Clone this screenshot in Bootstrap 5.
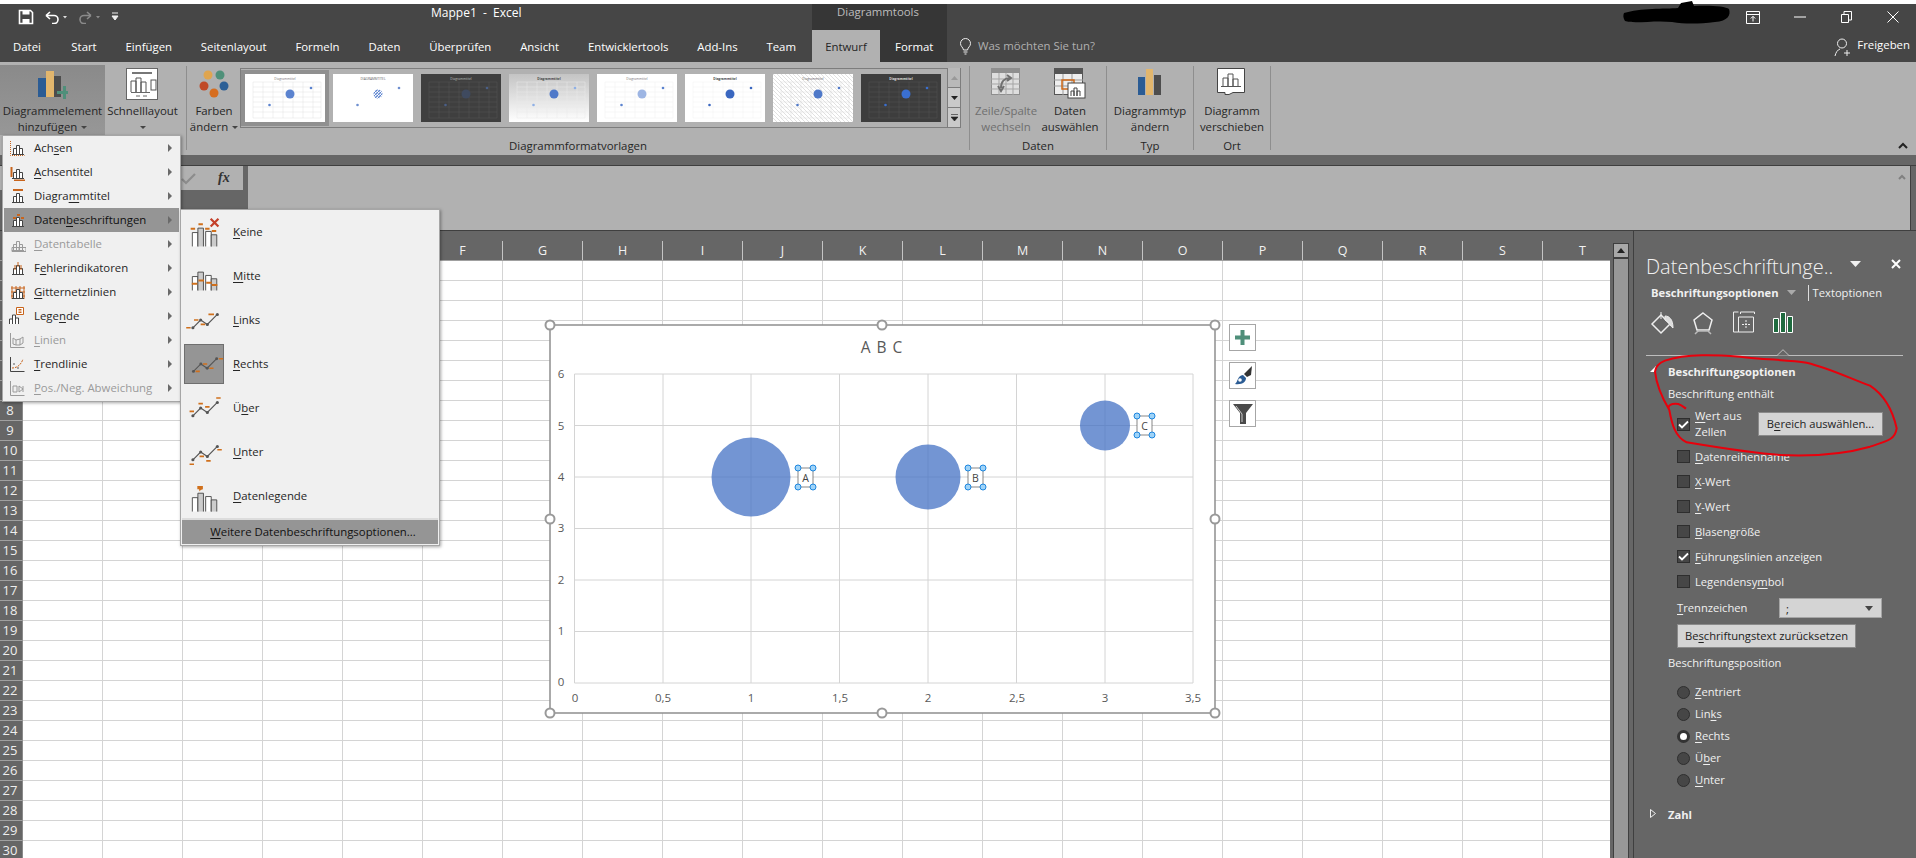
<!DOCTYPE html>
<html lang="de">
<head>
  <meta charset="UTF-8">
  <title>Mappe1 - Excel</title>
  <link href="https://cdn.jsdelivr.net/npm/bootstrap@5.3.3/dist/css/bootstrap.min.css" rel="stylesheet">
  <style>
    html, body { margin: 0; width: 1916px; height: 858px; overflow: hidden; background: #fff; }
    body { font-family: "Open Sans", "Liberation Sans", sans-serif; font-size: 11.4px; line-height: 16px; color: #262626; padding-top: 4px; position: relative; }
    u { text-underline-offset: 2px; }
    svg { display: block; }

    /* title bar and tabs */
    .xl-titlerow { height: 26px; background: #464646; color: #fff; }
    .xl-quick { width: 431px; padding-left: 18px; gap: 11px; }
    .xl-title { width: 381px; font-size: 12px; padding-top: 1px; }
    .xl-context { width: 135px; background: #363636; color: #bdbdbd; text-align: center; padding-right: 3px; }
    .xl-winbtns { width: 186px; }
    .xl-winbtns > div { width: 46.5px; }
    .xl-tabrow { height: 32px; background: #464646; color: #fff; }
    .xl-maintabs { width: 812px; }
    .xl-tab { padding: 9px 14.4px 0; white-space: nowrap; }
    .xl-tab:first-child { padding: 9px 16px 0 13px; }
    .xl-tab.is-active { background: #b1b1b1; color: #262626; width: 68px; padding: 9px 0 0; text-align: center; }
    .xl-tab.is-format { padding: 9px 0 0 15px; }
    .xl-contexttabs { width: 135px; background: #363636; }
    .xl-search { color: #b0b0b0; padding: 8px 0 0 12px; gap: 6px; width: 831px; }
    .xl-share { gap: 5px; padding: 7px 6px 0 0; }

    /* ribbon */
    .xl-ribbon { height: 93px; background: #b1b1b1; padding-top: 3px; position: relative; }
    .rb-group { height: 87px; }
    .rb-g1 { width: 186px; } .rb-g2 { width: 782px; } .rb-g3 { width: 136px; } .rb-g4 { width: 86px; } .rb-g5 { width: 76px; }
    .rb-sep { width: 1px; height: 84px; margin-top: 1px; background: #8e8e8e; }
    .rb-items { height: 70px; }
    .rb-label { height: 18px; margin-top: 2px; line-height: 18px; text-align: center; }
    .rb-btn { height: 70px; padding: 3px 0 0; border: 0; border-radius: 0; color: #262626; font-size: 11.4px; line-height: 16px; white-space: nowrap; }
    .rb-btn.is-open { background: linear-gradient(#8a8a8a, #979797); }
    .rb-btn.is-off { color: #6f6f6f; }
    .rb-w105 { width: 105px; } .rb-w75 { width: 75px; } .rb-w54 { width: 54px; } .rb-w64 { width: 64px; }
    .rb-icon { height: 35px; }
    .rb-caret { display: inline-block; width: 0; height: 0; border: 3px solid transparent; border-top: 3px solid #444; border-bottom: 0; margin-left: 4px; vertical-align: middle; }
    .rb-gallery { width: 721px; height: 60px; margin: 3px 0 0 -1px; border: 1px solid #7d7d7d; padding: 1px 0 0 0; background: #b1b1b1; }
    .rb-thumb { width: 88px; height: 56px; padding: 4px; }
    .rb-thumb.is-on { background: #909090; }
    .rb-spin { width: 14px; margin-left: 2px; margin-top: -2px; height: 60px; }
    .rb-spin > div { flex: 1; background: #c9c9c9; border-left: 1px solid #7d7d7d; border-bottom: 1px solid #7d7d7d; }
    .rb-spin > div:first-child { background: #b9b9b9; }
    .rb-collapse { position: absolute; right: 8px; bottom: 6px; }

    /* formula bar */
    .xl-formula { height: 76px; background: #666; padding-top: 10px; }
    .fx-inner { height: 66px; border-top: 1px solid #3f3f3f; border-bottom: 1px solid #3f3f3f; }
    .fx-tools { width: 243px; height: 24px; background: #b1b1b1; padding-left: 180px; gap: 21px; }
    .fx-sym { font-family: "Liberation Serif", serif; font-style: italic; font-weight: 700; font-size: 14px; color: #333; }
    .fx-input { width: 1663px; margin-left: 5px; background: #b1b1b1; border-right: 1px solid #3f3f3f; position: relative; }

    /* sheet */
    .xl-main { height: 627px; }
    .xl-left { width: 1610px; overflow: hidden; }
    .xl-colhead { height: 30px; background: #666; border-bottom: 1px solid #a0a0a0; padding: 10px 0 0 23px; color: #f2f2f2; font-size: 12.5px; line-height: 19px; }
    .xl-colhead > div { flex: 0 0 80px; text-align: center; border-right: 1px solid #c4c4c4; }
    .xl-sheet { height: 597px; }
    .xl-rows { width: 23px; background: #666; color: #eee; font-size: 13px; }
    .xl-rows > div { flex: 0 0 20px; line-height: 19px; text-align: center; padding-right: 2px; border-bottom: 1px solid #a0a0a0; border-right: 1px solid #8a8a8a; }
    .xl-cells { flex: 1; background-color: #fff;
      background-image: linear-gradient(to left, #d4d4d4 1px, transparent 1px), linear-gradient(to top, #d4d4d4 1px, transparent 1px);
      background-size: 80px 20px; }
    .xl-scroll { width: 23px; background: #666; padding: 12px 0 0 3px; }
    .xl-scrolltrack { width: 16px; height: 100%; background: #989898; border: solid #3f3f3f; border-width: 0 1px; }
    .xl-scrollup { height: 16px; margin: 0 -1px; border: 1px solid #3f3f3f; border-bottom-width: 2px; background: #a8a8a8; }

    /* pane */
    .xl-pane { flex: 1; background: #666; color: #f0f0f0; border-left: 1px solid #3f3f3f; padding-left: 12px; font-size: 11.2px; position: relative; }
    .pn-title { margin-top: 22px; height: 28px; font-size: 20px; line-height: 28px; font-weight: 300; white-space: nowrap; color: #f2f2f2; width: 194px; }
    .pn-drop { margin: 30px 0 0 10px; }
    .pn-close { margin: 28px 0 0 30px; }
    .pn-sub { margin-top: 3px; height: 18px; line-height: 18px; padding-left: 5px; }
    .pn-vline { width: 1px; height: 16px; background: #ddd; margin: 0 4px 0 12px; }
    .pn-icons { margin-top: 9px; height: 28px; }
    .pn-ico-1 { margin-left: 4px; } .pn-ico-2 { margin-left: 16px; } .pn-ico-3 { margin-left: 19px; } .pn-ico-4 { margin-left: 18px; }
    .pn-rule { position: relative; margin-top: 16px; width: 257px; height: 1px; background: #bdbdbd; }
    .pn-notch { position: absolute; left: 130px; top: -6px; }
    .pn-head { margin-top: 8px; height: 16px; padding-left: 22px; font-weight: 700; position: relative; }
    .pn-head svg { position: absolute; left: 4px; top: 2px; }
    .pn-text { margin-top: 6px; height: 16px; padding-left: 22px; }
    .pn-row { height: 25px; padding-left: 31px; gap: 5px; }
    .pn-firstrow { margin-top: 6px; height: 32px; padding-left: 31px; gap: 5px; }
    .pn-wrap { width: 58px; }
    .pn-gap { margin-top: 4px; }
    .pn-check { width: 13px; height: 13px; background: #464646; border: 1px solid #2e2e2e; flex: none; }
    .pn-btn { background: #d4d4d4; color: #222; border: 1px solid #8a8a8a; border-radius: 0; padding: 0; font-size: 11.2px; line-height: 16px; white-space: nowrap; }
    .pn-pick { width: 125px; height: 24px; }
    .pn-reset { width: 179px; height: 24px; margin: 6px 0 0 31px; display: block; }
    .pn-seprow { margin-top: 4px; height: 20px; padding-left: 31px; }
    .pn-seplabel { width: 102px; }
    .pn-select { width: 103px; height: 20px; background: #d4d4d4; border: 1px solid #a5a5a5; color: #222; padding-left: 6px; line-height: 17px; }
    .pn-radio { width: 13px; height: 13px; border-radius: 50%; background: #464646; border: 1px solid #2e2e2e; flex: none; position: relative; }
    .pn-radio.is-on { background: #fff; border: 3px solid #333; }
    .pn-radiorow { height: 22px; padding-left: 31px; gap: 5px; }
    .pn-poslabel { margin-top: 7px; }
    .pn-radios { margin-top: 10px; }
    .pn-zahl { margin-top: 16px; }

    /* menus */
    .xl-menu { position: absolute; display: block; min-width: 0; padding: 0; margin: 0; border-radius: 0; background: #f0f0f0; border: 1px solid #a6a6a6; box-shadow: 1px 1px 3px rgba(0,0,0,.35); font-size: 11.4px; color: #262626; }
    .xl-menu-main { left: 2px; top: 135px; width: 179px; height: 267px; padding: 0 1px; z-index: 6; }
    .xl-menu-sub { left: 180px; top: 209px; width: 260px; height: 337px; z-index: 7; padding: 0 1px; }
    .mn-item { height: 24px; padding: 0 0 0 30px; position: relative; color: inherit; line-height: 24px; white-space: nowrap; }
    .mn-item:hover { background: none; }
    .mn-item.is-on { background: #959595; color: #111; }
    .mn-item.is-off { color: #9a9a9a; }
    .mn-ico { position: absolute; left: 4px; top: 3px; }
    .mn-arrow { position: absolute; right: 7px; top: 8px; width: 0; height: 0; border: 4px solid transparent; border-left: 4px solid #6a6a6a; border-right: 0; }
    .sb-item { height: 44px; padding: 0 0 0 51px; position: relative; line-height: 44px; color: inherit; }
    .sb-item:hover { background: none; }
    .sb-ico { position: absolute; left: 2px; top: 2px; width: 40px; height: 40px; }
    .sb-ico.is-on { background: #959595; border: 1px solid #6f6f6f; }
    .sb-more { margin-top: 2px; height: 24px; background: #959595; color: #111; line-height: 24px; text-align: center; padding: 0 0 0 6px; box-shadow: 0 -2px 0 #dcdcdc; }
    .sb-more:hover { background: #959595; }

    /* chart */
    .xl-chart { position: absolute; left: 540px; top: 315px; z-index: 3; }
    .xl-side { position: absolute; left: 1229px; width: 27px; height: 27px; background: #fff; border: 1px solid #a6a6a6; z-index: 3; }
    .xl-side-a { top: 324px; } .xl-side-b { top: 362px; } .xl-side-c { top: 400px; }
    .xl-ink { position: absolute; left: 1630px; top: 240px; z-index: 8; pointer-events: none; }
    .xl-scribble { position: absolute; left: 1620px; top: 0; z-index: 8; }
  </style>
</head>
<body>
  <svg width="0" height="0" class="position-absolute">
    <defs>
      <symbol id="bars" viewBox="0 0 18 18"><path d="M5.5 15V9.5h3V15M8.5 15V6.5h3V15M11.5 15V9.5h3V15M4 15.5h12" fill="#fff" stroke="#444"/></symbol>
      <symbol id="barsoff" viewBox="0 0 18 18"><path d="M5.5 15V9.5h3V15M8.5 15V6.5h3V15M11.5 15V9.5h3V15M4 15.5h12" fill="none" stroke="#9a9a9a"/></symbol>
      <g id="subbars"><path d="M2.5 26V13.5h5V26" fill="#fff" stroke="#444" stroke-width=".8"/><path d="M7.5 26V9.5h5V26" fill="#ccc" stroke="#444" stroke-width=".8"/><path d="M14.5 26V12.5h5V26" fill="#fff" stroke="#444" stroke-width=".8"/><path d="M19.5 26V15.5h5V26" fill="#ccc" stroke="#444" stroke-width=".8"/></g>
      <g id="subline"><path d="M3 21L10 14L16 18L25 9" fill="none" stroke="#555"/><circle cx="3" cy="21" r="1.4" fill="#555"/><circle cx="10" cy="14" r="1.4" fill="#555"/><circle cx="16" cy="18" r="1.4" fill="#555"/><circle cx="25" cy="9" r="1.4" fill="#555"/></g>
    </defs>
  </svg>

  <!-- title bar -->
  <div class="xl-titlerow d-flex">
    <div class="xl-quick d-flex align-items-center">
      <svg width="16" height="16" viewBox="0 0 16 16"><path d="M1.5 1.5h11l2 2v11h-13z" fill="none" stroke="#fff" stroke-width="1.6"/><path d="M4.5 1.5h7v4h-7zM4.5 10h7v4.5h-7z" fill="#fff"/></svg>
      <svg width="22" height="14" viewBox="0 0 22 14"><path d="M1 5.5L5 2M1 5.5L5 9M1 5.5H9a4 4 0 0 1 0 8H7" fill="none" stroke="#fff" stroke-width="1.6"/><path d="M18 6h4l-2 2.5z" fill="#ddd"/></svg>
      <svg width="22" height="14" viewBox="0 0 22 14"><path d="M13 5.5L9 2M13 5.5L9 9M13 5.5H6a4 4 0 0 0 0 8h2" fill="none" stroke="#8a8a8a" stroke-width="1.6"/><path d="M18 6h4l-2 2.5z" fill="#8a8a8a"/></svg>
      <svg width="8" height="10" viewBox="0 0 8 10"><path d="M1 1h6M1 4h6L4 8z" stroke="#eee" fill="#eee"/></svg>
    </div>
    <div class="xl-title">Mappe1&nbsp; -&nbsp; Excel</div>
    <div class="xl-context">Diagrammtools</div>
    <div class="flex-grow-1"></div>
    <div class="xl-winbtns d-flex align-items-center text-center">
      <div class="d-flex justify-content-center"><svg width="14" height="13" viewBox="0 0 14 13"><path d="M.5.5h13v12H.5zM.5 3.5h13M7 10.5V5.5M4.8 7.5L7 5.3l2.2 2.2" fill="none" stroke="#fff"/></svg></div>
      <div class="d-flex justify-content-center"><svg width="12" height="2" viewBox="0 0 12 2"><path d="M0 1h12" stroke="#fff"/></svg></div>
      <div class="d-flex justify-content-center"><svg width="11" height="12" viewBox="0 0 11 12"><path d="M.5 3.5h7v8h-7zM3 3.5V.5h7.5V9H8" fill="none" stroke="#fff"/></svg></div>
      <div class="d-flex justify-content-center"><svg width="12" height="12" viewBox="0 0 12 12"><path d="M.5.5l11 11M11.5.5l-11 11" stroke="#fff"/></svg></div>
    </div>
  </div>
  <svg class="xl-scribble" width="115" height="26" viewBox="0 0 115 26"><path d="M4 13C20 8 45 9 58 8L61 3L72 1L74 6C88 5 106 6 109 9C111 15 108 21 95 22C78 24 65 24 52 22C35 20 14 24 5 21C3 18 3 15 4 13z" fill="#000"/></svg>

  <div class="xl-tabrow d-flex">
    <div class="xl-maintabs d-flex">
      <div class="xl-tab">Datei</div>
      <div class="xl-tab">Start</div>
      <div class="xl-tab">Einfügen</div>
      <div class="xl-tab">Seitenlayout</div>
      <div class="xl-tab">Formeln</div>
      <div class="xl-tab">Daten</div>
      <div class="xl-tab">Überprüfen</div>
      <div class="xl-tab">Ansicht</div>
      <div class="xl-tab">Entwicklertools</div>
      <div class="xl-tab">Add-Ins</div>
      <div class="xl-tab">Team</div>
    </div>
    <div class="xl-contexttabs d-flex">
      <div class="xl-tab is-active">Entwurf</div>
      <div class="xl-tab is-format">Format</div>
    </div>
    <div class="xl-search d-flex">
      <svg width="13" height="17" viewBox="0 0 13 17"><path d="M4.5 12C4 9 1.5 8.5 1.5 5.5a5 5 0 0 1 10 0C11.5 8.5 9 9 8.5 12zM4.5 14h4M5.5 16h2" fill="none" stroke="#eee"/></svg>
      <span>Was möchten Sie tun?</span>
    </div>
    <div class="xl-share d-flex flex-grow-1 justify-content-end">
      <svg width="18" height="20" viewBox="0 0 18 20"><circle cx="8" cy="6.5" r="4.5" fill="none" stroke="#eee"/><path d="M1 19c1-4 2.5-6 5-7M13 13v6M10 16h6" fill="none" stroke="#eee"/></svg>
      <span>Freigeben</span>
    </div>
  </div>

  <!-- ribbon -->
  <div class="xl-ribbon d-flex">
    <div class="rb-group rb-g1 d-flex flex-column">
      <div class="rb-items d-flex">
        <button class="btn rb-btn rb-w105 is-open d-flex flex-column align-items-center">
          <div class="rb-icon"><svg width="30" height="32" viewBox="0 0 30 32"><rect x="0" y="10" width="8" height="19" fill="#2b5c94"/><rect x="8" y="3" width="8" height="26" fill="#e2b66d"/><rect x="16" y="8" width="7" height="21" fill="#4d4d4d"/><path d="M19 23h6v-5h3v5h4v3h-4v5h-3v-5h-6z" fill="#4f8f7a"/></svg></div>
          <span>Diagrammelement</span>
          <span>hinzufügen<i class="rb-caret"></i></span>
        </button>
        <button class="btn rb-btn rb-w75 d-flex flex-column align-items-center">
          <div class="rb-icon"><svg width="33" height="33" viewBox="0 0 33 33"><rect x=".5" y=".5" width="31" height="31" fill="#fff" stroke="#666"/><path d="M6 5h20" stroke="#777" stroke-width="2"/><path d="M5 24V13h5v11M10 24V10h5v14M15 24V14h5v10" fill="none" stroke="#555"/><path d="M5 24.5h19M10 28h4M17 28h4" stroke="#666"/><rect x="25" y="12" width="5" height="10" fill="#fff" stroke="#555"/></svg></div>
          <span>Schnelllayout</span>
          <span><i class="rb-caret ms-0"></i></span>
        </button>
      </div>
    </div>
    <div class="rb-sep"></div>
    <div class="rb-group rb-g2 d-flex flex-column">
      <div class="rb-items d-flex">
        <button class="btn rb-btn rb-w54 d-flex flex-column align-items-center">
          <div class="rb-icon"><svg width="30" height="32" viewBox="0 0 30 32"><circle cx="9" cy="7" r="4.5" fill="#dfa54f"/><circle cx="21" cy="7" r="4.5" fill="#4f9079"/><circle cx="5" cy="18" r="4.5" fill="#c04a28"/><circle cx="25" cy="18" r="4.5" fill="#2c5f96"/><circle cx="15" cy="25" r="4.5" fill="#d66d1f"/></svg></div>
          <span>Farben</span>
          <span>ändern<i class="rb-caret"></i></span>
        </button>
        <div class="rb-gallery d-flex" id="gallery"></div>
      </div>
      <div class="rb-label">Diagrammformatvorlagen</div>
    </div>
    <div class="rb-sep"></div>
    <div class="rb-group rb-g3 d-flex flex-column">
      <div class="rb-items d-flex justify-content-center">
        <button class="btn rb-btn rb-w64 is-off d-flex flex-column align-items-center">
          <div class="rb-icon"><svg width="30" height="28" viewBox="0 0 30 28"><rect x=".5" y=".5" width="28" height="26" fill="#dedede" stroke="#8e8e8e"/><rect x="0" y="0" width="29" height="5" fill="#8e8e8e"/><path d="M0 11h29M0 16h29M0 21h29M8 5v22M15 5v22M22 5v22" stroke="#a5a5a5"/><path d="M10 20c0-7 4-10 9-10M16 7l4 3-4 3M7 18l3 5 3-5" fill="none" stroke="#707070" stroke-width="2"/></svg></div>
          <span>Zeile/Spalte</span>
          <span>wechseln</span>
        </button>
        <button class="btn rb-btn rb-w64 d-flex flex-column align-items-center">
          <div class="rb-icon"><svg width="32" height="31" viewBox="0 0 32 31"><rect x=".5" y=".5" width="28" height="26" fill="#eee" stroke="#555"/><rect x="0" y="0" width="29" height="6" fill="#555"/><path d="M0 12h29M0 18h29M9 6v21M18 6v21" stroke="#999"/><path d="M8 12h12v9H8z" fill="none" stroke="#d06a18" stroke-width="1.5"/><rect x="14" y="15" width="17" height="15" fill="#fff" stroke="#444"/><path d="M17 28v-5h3v5M20 28v-8h3v8M23 28v-5h3v5" fill="none" stroke="#444"/></svg></div>
          <span>Daten</span>
          <span>auswählen</span>
        </button>
      </div>
      <div class="rb-label">Daten</div>
    </div>
    <div class="rb-sep"></div>
    <div class="rb-group rb-g4 d-flex flex-column">
      <div class="rb-items d-flex justify-content-center">
        <button class="btn rb-btn d-flex flex-column align-items-center">
          <div class="rb-icon"><svg width="24" height="28" viewBox="0 0 24 28"><rect x="0" y="9" width="7" height="18" fill="#2b5c94"/><rect x="8" y="1" width="7" height="26" fill="#e2b66d"/><rect x="16" y="7" width="7" height="20" fill="#4d4d4d"/></svg></div>
          <span>Diagrammtyp</span>
          <span>ändern</span>
        </button>
      </div>
      <div class="rb-label">Typ</div>
    </div>
    <div class="rb-sep"></div>
    <div class="rb-group rb-g5 d-flex flex-column">
      <div class="rb-items d-flex justify-content-center">
        <button class="btn rb-btn d-flex flex-column align-items-center">
          <div class="rb-icon"><svg width="29" height="27" viewBox="0 0 29 27"><path d="M.5.5h27v24H16l-4 2H8v-2H.5z" fill="#fff" stroke="#444"/><path d="M6 18v-8h5v8M11 18V6h5v12M16 18v-7h5v7" fill="none" stroke="#555"/><path d="M4 18.5h20" stroke="#555"/></svg></div>
          <span>Diagramm</span>
          <span>verschieben</span>
        </button>
      </div>
      <div class="rb-label">Ort</div>
    </div>
    <div class="rb-sep"></div>
    <svg class="rb-collapse" width="10" height="7" viewBox="0 0 10 7"><path d="M1 6l4-4 4 4" fill="none" stroke="#222" stroke-width="2"/></svg>
  </div>

  <!-- formula bar -->
  <div class="xl-formula">
    <div class="fx-inner d-flex">
      <div class="fx-tools d-flex align-items-center">
        <svg width="17" height="13" viewBox="0 0 17 13"><path d="M2 7l4 4 9-9" fill="none" stroke="#8c8c8c" stroke-width="2.2"/></svg>
        <span class="fx-sym">fx</span>
      </div>
      <div class="fx-input">
        <svg class="position-absolute top-0 end-0 me-1 mt-2" width="8" height="6" viewBox="0 0 8 6"><path d="M1 5l3-3 3 3" fill="none" stroke="#808080" stroke-width="2"/></svg>
      </div>
    </div>
  </div>

  <!-- sheet and pane -->
  <div class="xl-main d-flex">
    <div class="xl-left d-flex flex-column">
      <div class="xl-colhead d-flex" id="colhead"></div>
      <div class="xl-sheet d-flex">
        <div class="xl-rows d-flex flex-column" id="rowhead"></div>
        <div class="xl-cells"></div>
      </div>
    </div>
    <div class="xl-scroll">
      <div class="xl-scrolltrack">
        <div class="xl-scrollup d-flex align-items-center justify-content-center">
          <svg width="8" height="5" viewBox="0 0 8 5"><path d="M0 5l4-5 4 5z" fill="#222"/></svg>
        </div>
      </div>
    </div>
    <div class="xl-pane">
      <div class="d-flex">
        <div class="pn-title overflow-hidden">Datenbeschriftunge..</div>
        <svg class="pn-drop" width="11" height="7" viewBox="0 0 11 7"><path d="M0 0h11L5.5 6z" fill="#f0f0f0"/></svg>
        <svg class="pn-close" width="10" height="10" viewBox="0 0 10 10"><path d="M1 1l8 8M9 1l-8 8" stroke="#fff" stroke-width="2"/></svg>
      </div>
      <div class="pn-sub d-flex align-items-center">
        <b>Beschriftungsoptionen</b>
        <svg class="ms-2" width="9" height="6" viewBox="0 0 9 6"><path d="M0 0h9L4.5 5z" fill="#aaa"/></svg>
        <span class="pn-vline"></span>
        <span>Textoptionen</span>
      </div>
      <div class="pn-icons d-flex">
        <svg class="pn-ico-1" width="26" height="24" viewBox="0 0 26 24"><path d="M2 13L11 4l9 9-9 9z" fill="none" stroke="#eee" stroke-width="1.5"/><path d="M11 1v7M15 5c4 0 8 3 8 12-2-1-4-6-8-8z" fill="#ddd" stroke="#eee"/></svg>
        <svg class="pn-ico-2" width="22" height="24" viewBox="0 0 22 24"><path d="M11 2l9 7-3 10H5L2 9z" fill="none" stroke="#eee" stroke-width="1.5"/><path d="M3 23l3-3M19 23l-3-3M6 20h10" stroke="#bbb" stroke-width="1.5"/></svg>
        <svg class="pn-ico-3" width="22" height="22" viewBox="0 0 22 22"><path d="M.5 1v20M.5 1h5M.5 21h5M7.5 1h14M7.5 1v2M21.5 1v2M5.5 6h15v15h-15z" fill="none" stroke="#eee"/><path d="M13 9v9M9 13.5h8" stroke="#eee" stroke-dasharray="2 1"/></svg>
        <svg class="pn-ico-4" width="21" height="22" viewBox="0 0 21 22"><path d="M.5 7.5h5v14h-5zM7.5 1.5h5v20h-5zM14.5 5.5h5v16h-5z" fill="#1f6b3f" stroke="#fff"/></svg>
      </div>
      <div class="pn-rule">
        <svg class="pn-notch" width="14" height="8" viewBox="0 0 14 8"><path d="M0 6.5h1L7 .7l6 5.8h1" fill="#666" stroke="#bdbdbd"/></svg>
      </div>
      <div class="pn-head">
        <svg width="6" height="6" viewBox="0 0 6 6"><path d="M6 0v6H0z" fill="#fff"/></svg>
        Beschriftungsoptionen
      </div>
      <div class="pn-text">Beschriftung enthält</div>
      <div class="pn-firstrow d-flex align-items-center">
        <span class="pn-check d-flex align-items-center justify-content-center"><svg width="11" height="9" viewBox="0 0 11 9"><path d="M1 4.5l3 3 6-6" fill="none" stroke="#fff" stroke-width="1.8"/></svg></span>
        <span class="pn-wrap"><u>W</u>ert aus Zellen</span>
        <button class="btn pn-btn pn-pick">B<u>e</u>reich auswählen...</button>
      </div>
      <div class="pn-row pn-gap d-flex align-items-center"><span class="pn-check"></span><span><u>D</u>atenreihenname</span></div>
      <div class="pn-row d-flex align-items-center"><span class="pn-check"></span><span><u>X</u>-Wert</span></div>
      <div class="pn-row d-flex align-items-center"><span class="pn-check"></span><span><u>Y</u>-Wert</span></div>
      <div class="pn-row d-flex align-items-center"><span class="pn-check"></span><span><u>B</u>lasengröße</span></div>
      <div class="pn-row d-flex align-items-center"><span class="pn-check d-flex align-items-center justify-content-center"><svg width="11" height="9" viewBox="0 0 11 9"><path d="M1 4.5l3 3 6-6" fill="none" stroke="#fff" stroke-width="1.8"/></svg></span><span><u>F</u>ührungslinien anzeigen</span></div>
      <div class="pn-row d-flex align-items-center"><span class="pn-check"></span><span>Legendensy<u>m</u>bol</span></div>
      <div class="pn-seprow d-flex align-items-center">
        <span class="pn-seplabel"><u>T</u>rennzeichen</span>
        <div class="pn-select d-flex justify-content-between align-items-center pe-2"><span>;</span><svg width="8" height="5" viewBox="0 0 8 5"><path d="M0 0h8L4 5z" fill="#444"/></svg></div>
      </div>
      <button class="btn pn-btn pn-reset">Be<u>s</u>chriftungstext zurücksetzen</button>
      <div class="pn-text pn-poslabel">Beschriftungsposition</div>
      <div class="pn-radios">
        <div class="pn-radiorow d-flex align-items-center"><span class="pn-radio"></span><span><u>Z</u>entriert</span></div>
        <div class="pn-radiorow d-flex align-items-center"><span class="pn-radio"></span><span>Lin<u>k</u>s</span></div>
        <div class="pn-radiorow d-flex align-items-center"><span class="pn-radio is-on"></span><span><u>R</u>echts</span></div>
        <div class="pn-radiorow d-flex align-items-center"><span class="pn-radio"></span><span>Ü<u>b</u>er</span></div>
        <div class="pn-radiorow d-flex align-items-center"><span class="pn-radio"></span><span><u>U</u>nter</span></div>
      </div>
      <div class="pn-head pn-zahl">
        <svg width="6" height="9" viewBox="0 0 6 9"><path d="M.5.5l5 4-5 4z" fill="none" stroke="#eee"/></svg>
        Zahl
      </div>
    </div>
  </div>

  <!-- chart object -->
  <svg class="xl-chart" width="690" height="410" viewBox="540 315 690 410" font-family="Open Sans, Liberation Sans, sans-serif">
    <rect x="550" y="325" width="665" height="388" fill="#fff" stroke="#8e8e8e" stroke-width="1.5"/>
    <g stroke="#d4d4d4" stroke-width="1">
      <path d="M574.5 374H1193M574.5 425.5H1193M574.5 477H1193M574.5 528.5H1193M574.5 580H1193M574.5 631.5H1193M574.5 683H1193"/>
      <path d="M574.5 374V683M663 374V683M751 374V683M839.5 374V683M928 374V683M1016.5 374V683M1105 374V683M1193 374V683"/>
    </g>
    <g fill="#4472c4" fill-opacity=".75">
      <circle cx="751" cy="477" r="39.5"/>
      <circle cx="928" cy="477" r="32.5"/>
      <circle cx="1105" cy="425.5" r="25"/>
    </g>
    <text x="882" y="353" text-anchor="middle" font-size="15.5" letter-spacing="1" fill="#595959">A B C</text>
    <g font-size="11.5" fill="#595959" text-anchor="middle">
      <text x="561" y="378">6</text><text x="561" y="430">5</text><text x="561" y="481">4</text><text x="561" y="532">3</text><text x="561" y="584">2</text><text x="561" y="635">1</text><text x="561" y="686">0</text>
      <text x="575" y="702">0</text><text x="663" y="702">0,5</text><text x="751" y="702">1</text><text x="840" y="702">1,5</text><text x="928" y="702">2</text><text x="1017" y="702">2,5</text><text x="1105" y="702">3</text><text x="1193" y="702">3,5</text>
    </g>
    <g id="labels"></g>
    <g fill="#fff" stroke="#999" stroke-width="2">
      <circle cx="550" cy="325" r="4.5"/><circle cx="882" cy="325" r="4.5"/><circle cx="1215" cy="325" r="4.5"/>
      <circle cx="550" cy="519" r="4.5"/><circle cx="1215" cy="519" r="4.5"/>
      <circle cx="550" cy="713" r="4.5"/><circle cx="882" cy="713" r="4.5"/><circle cx="1215" cy="713" r="4.5"/>
    </g>
  </svg>
  <div class="xl-side xl-side-a d-flex align-items-center justify-content-center"><svg width="15" height="15" viewBox="0 0 15 15"><path d="M5.5 0h4v5.5H15v4H9.5V15h-4V9.5H0v-4h5.5z" fill="#4f8f7a"/></svg></div>
  <div class="xl-side xl-side-b d-flex align-items-center justify-content-center"><svg width="20" height="21" viewBox="0 0 20 21"><path d="M19 1l-1 9-4 2-3-3z" fill="#333"/><path d="M10 10l3 3c0 4-4 7-11 6 3-2 2-8 8-9z" fill="#2b5c94"/><circle cx="7" cy="15" r="1.8" fill="#fff"/></svg></div>
  <div class="xl-side xl-side-c d-flex align-items-center justify-content-center"><svg width="20" height="21" viewBox="0 0 20 21"><path d="M0 1h20l-7 9v11H7V10z" fill="#4a4a4a"/><path d="M3 3l6 8v8" fill="none" stroke="#ccc"/></svg></div>

  <!-- chart element menu -->
  <div class="dropdown-menu xl-menu xl-menu-main">
    <a class="dropdown-item mn-item"><svg class="mn-ico" width="18" height="18" viewBox="0 0 18 18"><use href="#bars"/><path d="M2.5 2v14.5h14" fill="none" stroke="#c8641c" stroke-dasharray="1 1"/></svg>Ach<u>s</u>en<i class="mn-arrow"></i></a>
    <a class="dropdown-item mn-item"><svg class="mn-ico" width="18" height="18" viewBox="0 0 18 18"><use href="#bars"/><path d="M3.5 4v10M6 17.5h11" fill="none" stroke="#c8641c" stroke-width="2"/></svg><u>A</u>chsentitel<i class="mn-arrow"></i></a>
    <a class="dropdown-item mn-item"><svg class="mn-ico" width="18" height="18" viewBox="0 0 18 18"><use href="#bars"/><path d="M5 3h10" stroke="#c8641c" stroke-width="2"/></svg>Diagra<u>m</u>mtitel<i class="mn-arrow"></i></a>
    <a class="dropdown-item mn-item is-on"><svg class="mn-ico" width="18" height="18" viewBox="0 0 18 18"><use href="#bars"/><path d="M5 7h3M9 4h3M13 7h3" stroke="#c8641c" stroke-width="2"/></svg>Daten<u>b</u>eschriftungen<i class="mn-arrow"></i></a>
    <a class="dropdown-item mn-item is-off"><svg class="mn-ico" width="18" height="18" viewBox="0 0 18 18"><use href="#barsoff"/><path d="M4 12.5h14v4H4zM11 12.5v4" fill="none" stroke="#9a9a9a"/></svg><u>D</u>atentabelle<i class="mn-arrow"></i></a>
    <a class="dropdown-item mn-item"><svg class="mn-ico" width="18" height="18" viewBox="0 0 18 18"><use href="#bars"/><path d="M7 6v5M10 3v5M13 6v5" stroke="#c8641c"/></svg>F<u>e</u>hlerindikatoren<i class="mn-arrow"></i></a>
    <a class="dropdown-item mn-item"><svg class="mn-ico" width="18" height="18" viewBox="0 0 18 18"><path d="M4 3v13M8 3v13M12 3v13M16 3v13M3 5h14M3 9h14M3 13h14" stroke="#c8641c"/><use href="#bars"/></svg><u>G</u>itternetzlinien<i class="mn-arrow"></i></a>
    <a class="dropdown-item mn-item"><svg class="mn-ico" width="18" height="18" viewBox="0 0 18 18"><path d="M1.5 17V12h3v5M4.5 17V8h3v9M7.5 17v-6h3v6" fill="#fff" stroke="#444"/><path d="M8.5.5h7v7h-7zM10.5 2.5h3M10.5 4h3M10.5 5.5h3" fill="#fff" stroke="#c8641c"/></svg>Lege<u>n</u>de<i class="mn-arrow"></i></a>
    <a class="dropdown-item mn-item is-off"><svg class="mn-ico" width="18" height="18" viewBox="0 0 18 18"><path d="M2.5 2v14.5h14M5 13V7l3 2v5zM8 9l4-1v6l-4 0M12 8l3-2v6l-3 2" fill="none" stroke="#9a9a9a"/></svg><u>L</u>inien<i class="mn-arrow"></i></a>
    <a class="dropdown-item mn-item"><svg class="mn-ico" width="18" height="18" viewBox="0 0 18 18"><path d="M2.5 2v14.5h14" fill="none" stroke="#444"/><path d="M4 13c5 0 9-3 11-9" fill="none" stroke="#c8641c" stroke-dasharray="2 1"/><circle cx="6" cy="9" r=".8" fill="#444"/><circle cx="10" cy="13" r=".8" fill="#444"/></svg><u>T</u>rendlinie<i class="mn-arrow"></i></a>
    <a class="dropdown-item mn-item is-off"><svg class="mn-ico" width="18" height="18" viewBox="0 0 18 18"><path d="M2.5 2v14.5h14M5 7h4v6H5zM11 7l4 3-4 3zM15 7v6" fill="none" stroke="#9a9a9a"/></svg><u>P</u>os./Neg. Abweichung<i class="mn-arrow"></i></a>
  </div>

  <!-- data label submenu -->
  <div class="dropdown-menu xl-menu xl-menu-sub">
    <a class="dropdown-item sb-item"><div class="sb-ico"><svg width="40" height="40" viewBox="-5 -5 36 36"><use href="#subbars"/><path d="M1 10h4M8 6h4M14 10h4M20 12h4" stroke="#d0701c" stroke-width="1.8"/><path d="M19 1l7 7M26 1l-7 7" stroke="#c4402a" stroke-width="2"/></svg></div><u>K</u>eine</a>
    <a class="dropdown-item sb-item"><div class="sb-ico"><svg width="40" height="40" viewBox="-5 -5 36 36"><use href="#subbars"/><path d="M2 20h5M8 17h5M15 19h5M20 21h5" stroke="#d0701c" stroke-width="1.8"/></svg></div><u>M</u>itte</a>
    <a class="dropdown-item sb-item"><div class="sb-ico"><svg width="40" height="40" viewBox="-5 -4 36 36"><use href="#subline"/><path d="M-3 21h4M4 14h4M10 18h4M17 9h5" stroke="#d0701c" stroke-width="1.5"/></svg></div><u>L</u>inks</a>
    <a class="dropdown-item sb-item"><div class="sb-ico is-on"><svg width="38" height="38" viewBox="-5 -4 36 36"><use href="#subline"/><path d="M5 21h4M12 14h4M18 18h4M27 9h4" stroke="#d0701c" stroke-width="1.5"/></svg></div><u>R</u>echts</a>
    <a class="dropdown-item sb-item"><div class="sb-ico"><svg width="40" height="40" viewBox="-5 -4 36 36"><use href="#subline"/><path d="M0 17h4M8 10h4M14 13h4M24 5h4" stroke="#d0701c" stroke-width="1.5"/></svg></div>Ü<u>b</u>er</a>
    <a class="dropdown-item sb-item"><div class="sb-ico"><svg width="40" height="40" viewBox="-5 -4 36 36"><use href="#subline"/><path d="M0 25h4M9 18h4M15 22h4M25 12h4" stroke="#d0701c" stroke-width="1.5"/></svg></div><u>U</u>nter</a>
    <a class="dropdown-item sb-item"><div class="sb-ico"><svg width="40" height="40" viewBox="-5 -6 36 36"><use href="#subbars"/><path d="M7 3h5v3l-2 .5-1 1.5-.5-2H7z" fill="#d0701c"/></svg></div><u>D</u>atenlegende</a>
    <a class="dropdown-item sb-more"><u>W</u>eitere Datenbeschriftungsoptionen...</a>
  </div>

  <!-- red freehand marking from the screenshot -->
  <svg class="xl-ink" width="286" height="240" viewBox="0 0 858 720">
    <path d="M105 362C170 340 260 345 330 350C400 360 470 358 530 368C600 385 660 415 720 437C770 470 790 520 800 565C795 600 770 603 720 620C650 640 560 650 450 645C370 640 260 622 170 607C135 590 125 550 118 510C100 480 80 440 75 395C78 375 90 368 105 362zM118 510C110 495 125 490 145 492C155 495 160 500 168 506" fill="none" stroke="#e8000c" stroke-width="6"/>
  </svg>

  <script>
    // column letters
    const colhead = document.getElementById('colhead');
    'ABCDEFGHIJKLMNOPQRST'.split('').forEach(c => {
      const d = document.createElement('div');
      d.textContent = c;
      colhead.appendChild(d);
    });

    // row numbers
    const rowhead = document.getElementById('rowhead');
    for (let i = 1; i <= 30; i++) {
      const d = document.createElement('div');
      d.textContent = i;
      rowhead.appendChild(d);
    }

    // data label boxes in the chart
    const labels = [['A', 798, 468], ['B', 968, 468], ['C', 1137, 416]];
    document.getElementById('labels').innerHTML = labels.map(([t, x, y]) => {
      const dots = [[x, y], [x + 15, y], [x, y + 19], [x + 15, y + 19]]
        .map(([a, b]) => `<circle cx="${a}" cy="${b}" r="3" fill="#9fd3f7" stroke="#1c86e0"/>`).join('');
      return `<rect x="${x}" y="${y}" width="15" height="19" fill="#fff" stroke="#555" stroke-width=".7"/>` +
        `<text x="${x + 7.5}" y="${y + 13.5}" text-anchor="middle" font-size="10.5" fill="#444">${t}</text>` + dots;
    }).join('');

    // chart style gallery
    const thumbs = [
      { bg: '#fff', grid: '#e2e2e2', title: 'Diagrammtitel', tc: '#777', big: '#5b83cf', dot: '#5b83cf' },
      { bg: '#fff', grid: '#fff', title: 'DIAGRAMMTITEL', tc: '#666', big: '#7f9fd9', dot: '#6e8fd0', hatch: true },
      { bg: '#3f3f3f', grid: '#555', title: 'Diagrammtitel', tc: '#bbb', big: '#3f4a5f', dot: '#4a5f88' },
      { bg: 'url(#thumbfade)', grid: '#e8e8e8', title: 'Diagrammtitel', tc: '#444', big: '#4f79c9', dot: '#8fb0e6', bold: true },
      { bg: '#fff', grid: '#ececec', title: 'Diagrammtitel', tc: '#777', big: '#9db5e3', dot: '#5b83cf' },
      { bg: '#fff', grid: '#f0f0f0', title: 'Diagrammtitel', tc: '#444', big: '#3a67c0', dot: '#3a67c0', bold: true },
      { bg: 'url(#thumbstripe)', grid: '#ddd', title: 'Diagrammtitel', tc: '#666', big: '#4f79c9', dot: '#4f79c9' },
      { bg: '#3d3d3d', grid: '#555', title: 'Diagrammtitel', tc: '#ddd', big: '#3a6fd0', dot: '#3a6fd0', bold: true }
    ];
    const gallery = document.getElementById('gallery');
    thumbs.forEach((t, i) => {
      const gx = [8, 18, 28, 38, 48, 58, 68, 76].map(x => `M${x} 8V44`).join('');
      const gy = [8, 13, 18, 23, 28, 33, 38, 44].map(y => `M8 ${y}H76`).join('');
      const box = document.createElement('div');
      box.className = 'rb-thumb' + (i === 0 ? ' is-on' : '');
      box.innerHTML = `<svg width="80" height="48" viewBox="0 0 80 48">
        <defs>
          <linearGradient id="thumbfade" x1="0" y1="0" x2="0" y2="1"><stop offset="0" stop-color="#c4c4c4"/><stop offset="1" stop-color="#fff"/></linearGradient>
          <pattern id="thumbstripe" width="4" height="4" patternUnits="userSpaceOnUse"><rect width="4" height="4" fill="#fff"/><path d="M0 0L4 4" stroke="#ccc" stroke-width=".6"/></pattern>
          <pattern id="thumbhatch" width="3" height="3" patternUnits="userSpaceOnUse"><rect width="3" height="3" fill="#fff"/><path d="M0 3L3 0" stroke="#5b83cf" stroke-width="1.3"/></pattern>
        </defs>
        <rect width="80" height="48" fill="${t.bg}"/>
        <path d="${gx}${gy}" stroke="${t.grid}" stroke-width=".5"/>
        <text x="40" y="6" text-anchor="middle" font-size="3.2" font-weight="${t.bold ? 700 : 400}" fill="${t.tc}">${t.title}</text>
        <circle cx="24.5" cy="31" r="1.3" fill="${t.dot}"/>
        <circle cx="45" cy="20" r="4.5" fill="${t.hatch ? 'url(#thumbhatch)' : t.big}"/>
        <circle cx="66" cy="14" r="1.3" fill="${t.dot}"/>
      </svg>`;
      gallery.appendChild(box);
    });
    const spin = document.createElement('div');
    spin.className = 'rb-spin d-flex flex-column';
    spin.innerHTML = `
      <div class="d-flex align-items-center justify-content-center"><svg width="7" height="4" viewBox="0 0 7 4"><path d="M0 4l3.5-4L7 4z" fill="#999"/></svg></div>
      <div class="d-flex align-items-center justify-content-center"><svg width="7" height="4" viewBox="0 0 7 4"><path d="M0 0l3.5 4L7 0z" fill="#222"/></svg></div>
      <div class="d-flex align-items-center justify-content-center"><svg width="7" height="7" viewBox="0 0 7 7"><path d="M0 .5h7M0 3l3.5 4L7 3z" stroke="#222" stroke-width=".6" fill="#222"/></svg></div>`;
    gallery.appendChild(spin);
  </script>
  <script src="https://cdn.jsdelivr.net/npm/bootstrap@5.3.3/dist/js/bootstrap.bundle.min.js"></script>
</body>
</html>
